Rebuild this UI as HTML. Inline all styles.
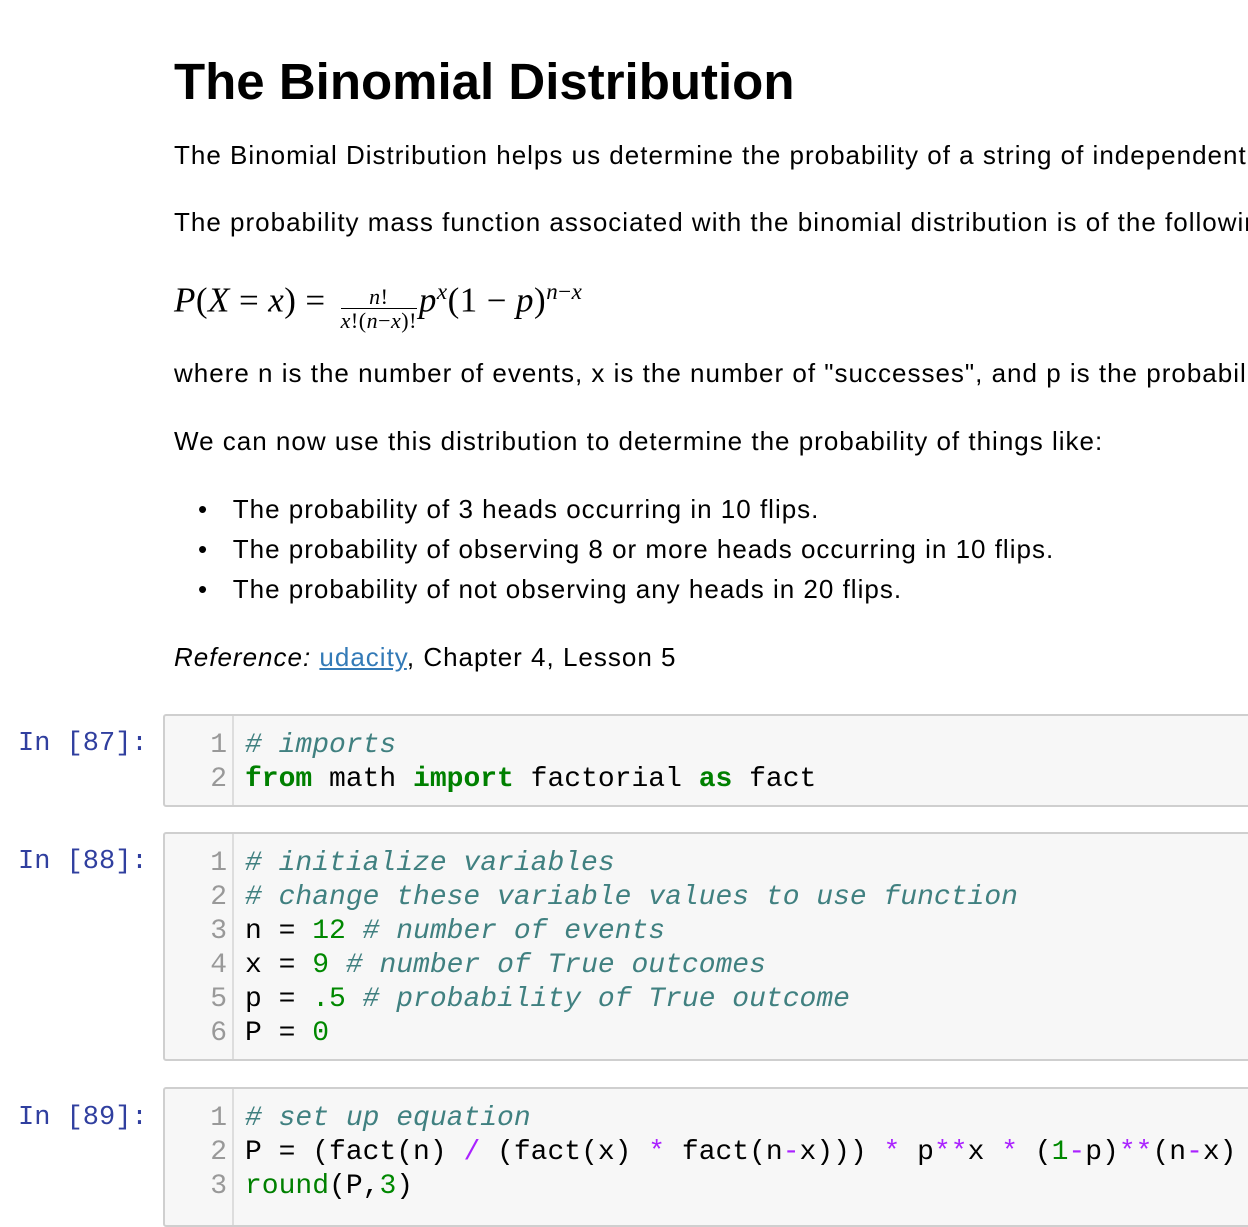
<!DOCTYPE html>
<html><head><meta charset="utf-8"><style>
body{margin:0;width:1248px;height:1204px;overflow:hidden;background:#fff;font-family:"Liberation Sans",Arial,sans-serif;color:#000;position:relative}
.t{position:absolute;left:174px;white-space:nowrap;font-size:26px;line-height:30px;letter-spacing:1px}
h1{position:absolute;left:174px;top:52px;margin:0;font-size:51px;line-height:60px;font-weight:bold;white-space:nowrap}
.m{font-family:"Liberation Serif",serif;font-style:italic;letter-spacing:0.5px}
.r{font-style:normal}
.eq{font-style:normal;margin:0 9px}
a{color:#337ab7;text-decoration:underline}
.p{position:absolute;left:18px;font-family:"Liberation Mono",monospace;font-size:27px;color:#303F9F}
.cell{position:absolute;left:163px;width:1100px;background:#f7f7f7;border:2px solid #cfcfcf;border-radius:3px;box-sizing:border-box}
.g{position:absolute;left:0;top:0;bottom:0;width:67px;border-right:2px solid #ddd}
.code{position:absolute;left:0;top:13px;font-family:"Liberation Mono",monospace;font-size:28px;line-height:34px;white-space:pre}
.ln{display:inline-block;width:62px;text-align:right;color:#999;margin-right:18px}
.c{color:#408080;font-style:italic}.k{color:#008000;font-weight:bold}.n{color:#080}.o{color:#AA22FF}.b{color:#008000}
</style></head><body>
<h1>The Binomial Distribution</h1>
<div class="t" style="top:140px">The Binomial Distribution helps us determine the probability of a string of independent events.</div>
<div class="t" style="top:207px">The probability mass function associated with the binomial distribution is of the following form:</div>
<div class="t m" style="top:272px;font-size:35px;line-height:40px">P<span class="r">(</span>X<span class="eq">=</span>x<span class="r">)</span><span class="eq">=</span><span style="display:inline-block;vertical-align:-16px;text-align:center;font-size:22px;line-height:23px;margin:0 2px 0 6px;letter-spacing:0.5px"><span style="display:block;border-bottom:1px solid #000">n<span class="r">!</span></span><span style="display:block">x<span class="r">!(</span>n<span class="r">−</span>x<span class="r">)!</span></span></span>p<sup style="font-size:23px">x</sup><span class="r">(1</span><span class="eq">−</span>p<span class="r">)</span><sup style="font-size:23px">n<span class="r">−</span>x</sup></div>
<div class="t" style="top:358px">where n is the number of events, x is the number of "successes", and p is the probability of success.</div>
<div class="t" style="top:426px">We can now use this distribution to determine the probability of things like:</div>
<div class="t" style="top:494px;left:198px">•&nbsp;&nbsp;&nbsp;The probability of 3 heads occurring in 10 flips.</div>
<div class="t" style="top:534px;left:198px">•&nbsp;&nbsp;&nbsp;The probability of observing 8 or more heads occurring in 10 flips.</div>
<div class="t" style="top:574px;left:198px">•&nbsp;&nbsp;&nbsp;The probability of not observing any heads in 20 flips.</div>
<div class="t" style="top:642px"><i>Reference:</i> <a>udacity</a>, Chapter 4, Lesson 5</div>

<div class="p" style="top:729px">In [87]:</div>
<div class="cell" style="top:714px;height:93px"><div class="g"></div><div class="code"><span class="ln">1</span><span class="c"># imports</span>
<span class="ln">2</span><span class="k">from</span> math <span class="k">import</span> factorial <span class="k">as</span> fact</div></div>

<div class="p" style="top:847px">In [88]:</div>
<div class="cell" style="top:832px;height:229px"><div class="g"></div><div class="code"><span class="ln">1</span><span class="c"># initialize variables</span>
<span class="ln">2</span><span class="c"># change these variable values to use function</span>
<span class="ln">3</span>n = <span class="n">12</span> <span class="c"># number of events</span>
<span class="ln">4</span>x = <span class="n">9</span> <span class="c"># number of True outcomes</span>
<span class="ln">5</span>p = <span class="n">.5</span> <span class="c"># probability of True outcome</span>
<span class="ln">6</span>P = <span class="n">0</span></div></div>

<div class="p" style="top:1103px">In [89]:</div>
<div class="cell" style="top:1087px;height:140px"><div class="g"></div><div class="code"><span class="ln">1</span><span class="c"># set up equation</span>
<span class="ln">2</span>P = (fact(n) <span class="o">/</span> (fact(x) <span class="o">*</span> fact(n<span class="o">-</span>x))) <span class="o">*</span> p<span class="o">**</span>x <span class="o">*</span> (<span class="n">1</span><span class="o">-</span>p)<span class="o">**</span>(n<span class="o">-</span>x)
<span class="ln">3</span><span class="b">round</span>(P,<span class="n">3</span>)</div></div>
</body></html>
